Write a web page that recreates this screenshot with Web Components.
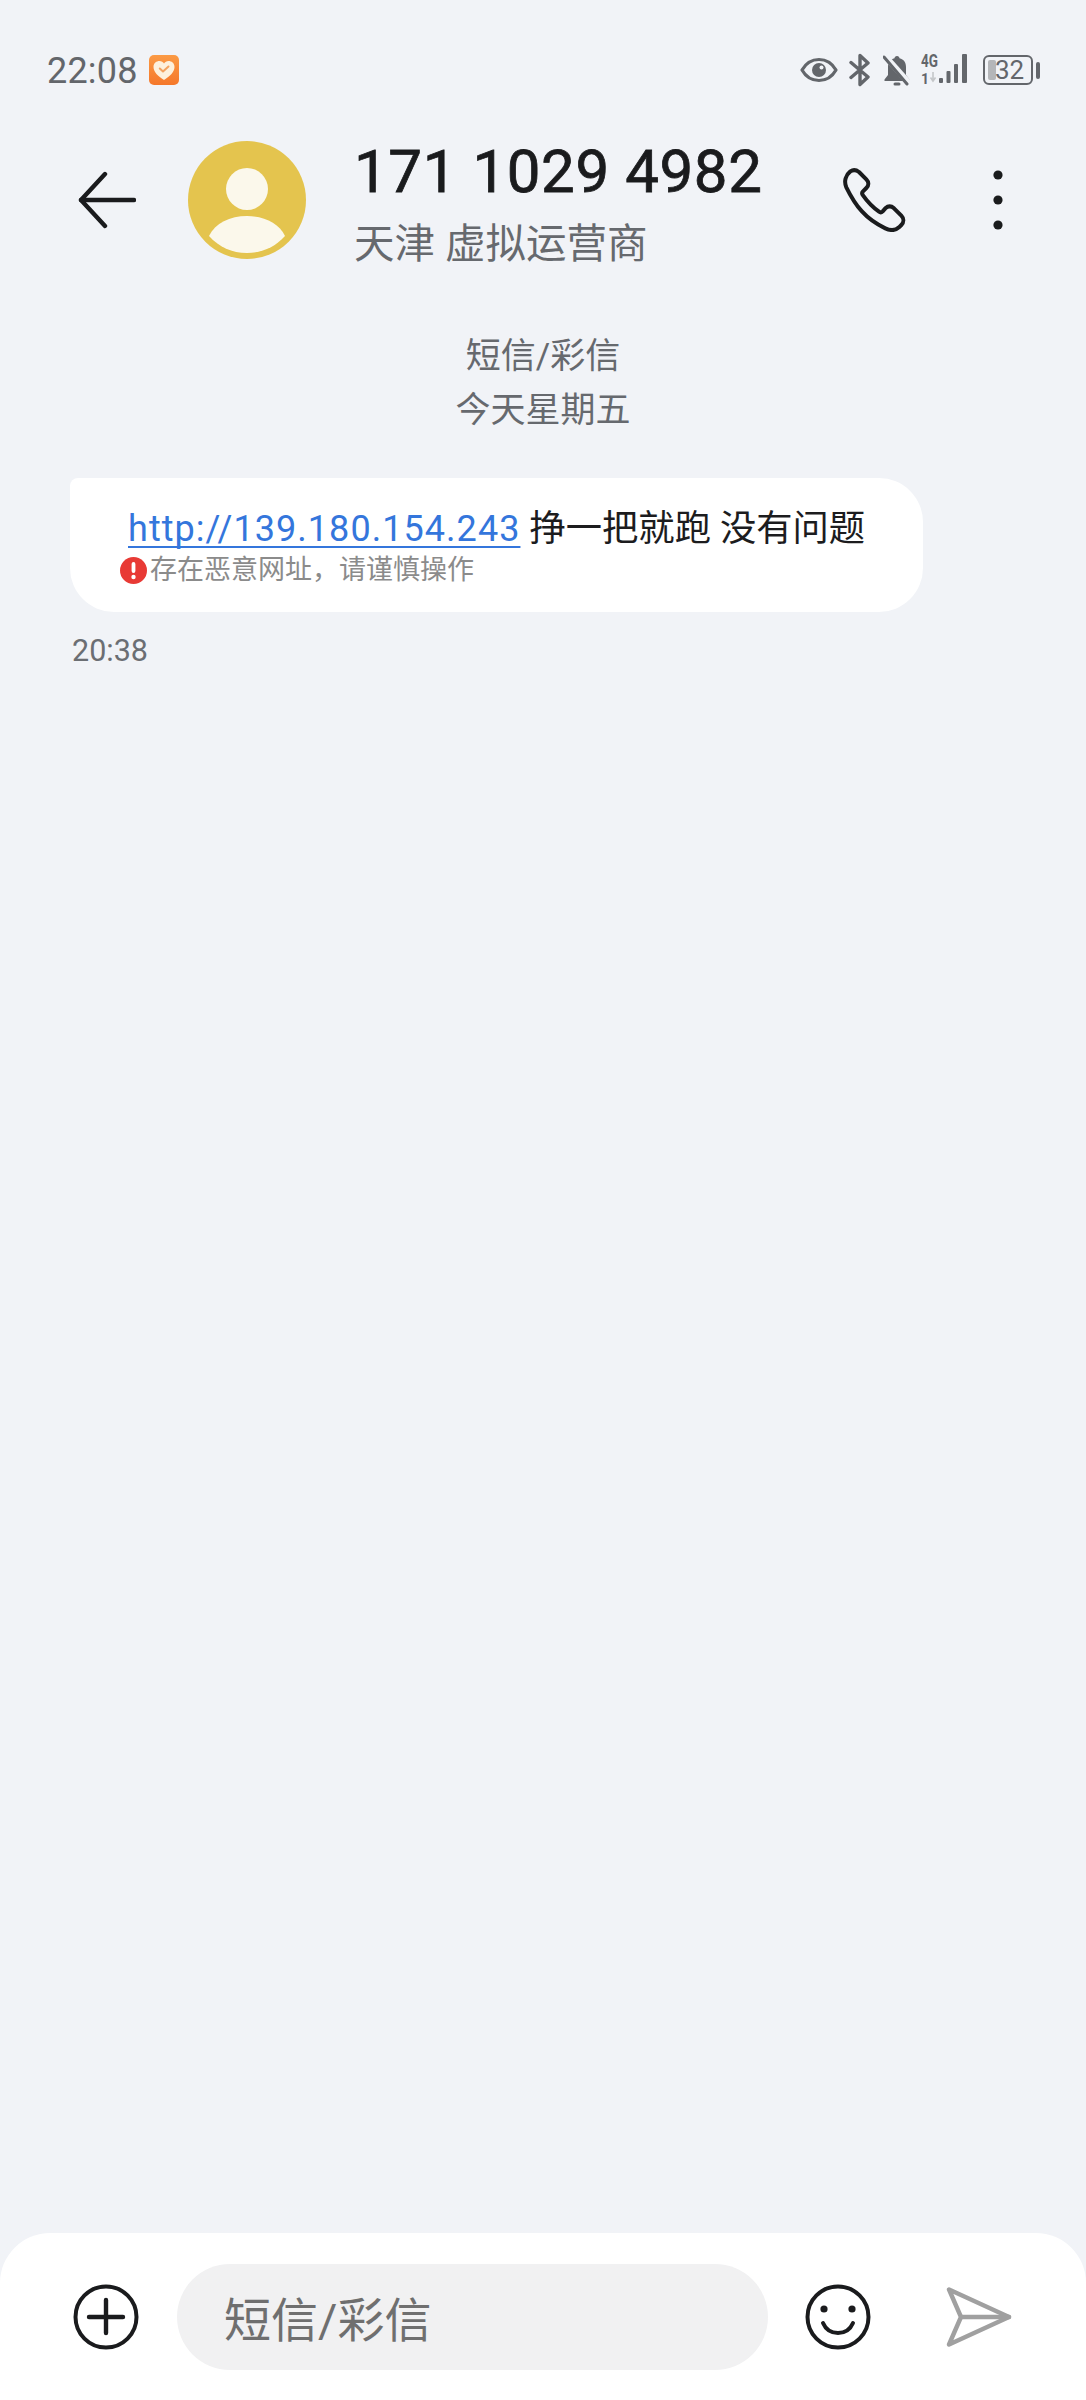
<!DOCTYPE html>
<html lang="zh">
<head>
<meta charset="utf-8">
<title>短信</title>
<style>
  html, body { margin: 0; padding: 0; }
  body {
    width: 1086px;
    height: 2400px;
    background: #f1f3f7;
    font-family: Roboto, "Noto Sans CJK SC", sans-serif;
    overflow: hidden;
  }
  sms-screen { height: 2400px; }
</style>
</head>
<body>
<sms-screen>
  <status-bar slot="top" time="22:08" battery="32"></status-bar>
  <chat-header slot="top" number="171 1029 4982" place="天津 虚拟运营商"></chat-header>
  <thread-notice>
    <div>短信/彩信</div>
    <div>今天星期五</div>
  </thread-notice>
  <message-bubble time="20:38" url="http://139.180.154.243" warning="存在恶意网址，请谨慎操作">挣一把就跑 没有问题</message-bubble>
  <composer-bar slot="bottom" placeholder="短信/彩信"></composer-bar>
</sms-screen>

<script>
const FONT = 'Roboto, "Noto Sans CJK SC", sans-serif';

class SmsScreen extends HTMLElement {
  connectedCallback() {
    this.attachShadow({ mode: 'open' });
    this.shadowRoot.innerHTML = `
      <style>
        :host { display: flex; flex-direction: column; font-family: ${FONT}; }
        .list { flex: 1; min-height: 0; }
      </style>
      <slot name="top"></slot>
      <div class="list"><slot></slot></div>
      <slot name="bottom"></slot>
    `;
  }
}

class StatusBar extends HTMLElement {
  connectedCallback() {
    this.attachShadow({ mode: 'open' });
    this.shadowRoot.innerHTML = `
      <style>
        :host {
          display: flex;
          align-items: center;
          height: 140px;
          padding: 0 46px 0 47px;
          box-sizing: border-box;
          color: #63666b;
        }
        .time { font-size: 36px; line-height: 40px; letter-spacing: .2px; padding-top: 1px; }
        .app { margin-left: 11px; display: block; }
        .right { margin-left: auto; display: flex; align-items: center; }
        svg { display: block; }
        .net { position: relative; width: 49px; height: 34px; margin-left: 10px; }
        .net svg { position: absolute; left: 0; top: 0; }
        .g4 {
          position: absolute; left: 0; top: -2px;
          font-size: 18px; line-height: 20px; font-weight: 700;
          transform: scaleX(.75); transform-origin: left top;
        }
        .one {
          position: absolute; left: 0; top: 18px;
          font-size: 14px; line-height: 16px; font-weight: 700;
        }
        .battery {
          position: relative;
          width: 50px; height: 30px;
          margin-left: 13px;
          padding-left: 3px;
          border: 2.5px solid #63666b;
          border-radius: 6px;
          box-sizing: border-box;
          display: flex; align-items: center; justify-content: center;
          font-size: 26px;
          line-height: 26px;
          overflow: hidden;
        }
        .battery i {
          position: absolute; left: 3px; top: 3px; bottom: 3px; width: 8px;
          background: #b4b6b9; border-radius: 2px;
        }
        .battery span { position: relative; }
        .nub { width: 4px; height: 17px; margin-left: 3px; background: #63666b; border-radius: 2px; }
      </style>
      <span class="time">${this.getAttribute('time')}</span>
      <svg class="app" width="30" height="30" viewBox="0 0 30 30">
        <defs><linearGradient id="o" x1="0" y1="0" x2="0" y2="1">
          <stop offset="0" stop-color="#fb9a45"/><stop offset="1" stop-color="#f5772a"/>
        </linearGradient></defs>
        <rect width="30" height="30" rx="5" fill="url(#o)"/>
        <path d="M15 25C9 21 4.500 17 4.500 12C4.500 8 7.500 6 10.500 6C12.500 6 14 7 15 8.500C16 7 17.500 6 19.500 6C22.500 6 25.500 8 25.500 12C25.500 17 21 21 15 25Z" fill="#fdf0dc"/>
        <path d="M10.800 13.500L14 16.500L19.500 11.500" fill="none" stroke="#f3a25f" stroke-width="2" stroke-linecap="round" stroke-linejoin="round"/>
      </svg>
      <div class="right">
        <svg width="38" height="26" viewBox="0 0 38 26">
          <path d="M2 13C6 6 12 2.500 19 2.500C26 2.500 32 6 36 13C32 20 26 23.500 19 23.500C12 23.500 6 20 2 13Z" fill="none" stroke="#63666b" stroke-width="3.200" stroke-linejoin="round"/>
          <circle cx="19" cy="13" r="7" fill="#63666b"/>
          <circle cx="21.500" cy="10.500" r="2" fill="#f1f3f7"/>
        </svg>
        <svg style="margin-left:11px" width="22" height="34" viewBox="0 0 22 34">
          <path d="M2 9.500L19 24L11 31.500V2.500L19 10L2 24.500" fill="none" stroke="#63666b" stroke-width="3.400" stroke-linejoin="round" stroke-linecap="round"/>
        </svg>
        <svg style="margin-left:12px" width="28" height="34" viewBox="0 0 28 34">
          <path d="M14 3C15.500 3 16.500 4 16.500 5.300C20.800 6.300 23 9.500 23 14V22L26.500 26.500V28H1.500V26.500L5 22V14C5 9.500 7.200 6.300 11.500 5.300C11.500 4 12.500 3 14 3Z" fill="#63666b"/>
          <rect x="10.500" y="29.500" width="7" height="3" rx="1.500" fill="#63666b"/>
          <path d="M2 3L26 30" stroke="#f1f3f7" stroke-width="6"/>
          <path d="M1 4L24 31" stroke="#63666b" stroke-width="3" stroke-linecap="round"/>
        </svg>
        <div class="net">
          <span class="g4">4G</span>
          <span class="one">1</span>
          <svg width="49" height="34" viewBox="0 0 49 34">
            <path d="M12 19V27M9.500 24.500L12 28L14.500 24.500" fill="none" stroke="#c4c6c9" stroke-width="1.600"/>
            <rect x="18" y="25" width="4" height="5" rx="1" fill="#63666b"/>
            <rect x="25.500" y="18" width="4" height="12" rx="1" fill="#63666b"/>
            <rect x="33" y="11" width="4" height="19" rx="1" fill="#63666b"/>
            <rect x="41" y="1" width="5" height="29" rx="1" fill="#63666b"/>
          </svg>
        </div>
        <div class="battery"><i></i><span>${this.getAttribute('battery')}</span></div>
        <div class="nub"></div>
      </div>
    `;
  }
}

class ChatHeader extends HTMLElement {
  connectedCallback() {
    this.attachShadow({ mode: 'open' });
    this.shadowRoot.innerHTML = `
      <style>
        :host {
          display: flex;
          align-items: center;
          height: 120px;
          padding: 0 78px 0 77px;
          box-sizing: border-box;
        }
        svg { display: block; flex: none; }
        .avatar { margin-left: 52px; }
        .who { margin: 4px 0 0 48px; display: flex; flex-direction: column; }
        .number {
          font-size: 60px; line-height: 70px; font-weight: 400; color: #1a1b1d;
          letter-spacing: .6px;
          -webkit-text-stroke: .8px #1a1b1d;
        }
        .place { font-size: 40.5px; line-height: 48px; color: #66696e; margin-top: 13px; white-space: pre; }
        .phone { margin-left: auto; }
        .more { margin-left: 82px; }
      </style>
      <svg width="59" height="58" viewBox="0 0 59 58" fill="none" stroke="#1a1b1d" stroke-width="4.400" stroke-linecap="round" stroke-linejoin="round">
        <path d="M28 3L4 29L28 55"/>
        <path d="M4 29H57"/>
      </svg>
      <svg class="avatar" width="118" height="118" viewBox="0 0 118 118">
        <circle cx="59" cy="59" r="59" fill="#e4c44e"/>
        <circle cx="59" cy="48" r="21" fill="#fbf8eb"/>
        <path d="M21 95C27 82 42 75 59 75C76 75 91 82 97 95C87 106 74 112 59 112C44 112 31 106 21 95Z" fill="#fbf8eb"/>
      </svg>
      <div class="who">
        <span class="number">${this.getAttribute('number')}</span>
        <span class="place">${this.getAttribute('place')}</span>
      </div>
      <svg class="phone" width="64" height="64" viewBox="125 82 192 192">
        <path d="M150 92C158 87 168 88 176 94L198 116C206 124 206 134 198 142L188 152C185 155 185 160 188 164C202 184 218 200 236 213C240 216 244 215 247 212L255 203C263 196 273 196 281 203L303 225C311 233 311 245 303 253L296 260C285 270 270 270 255 263C195 235 165 195 138 140C130 122 136 103 150 92Z" fill="none" stroke="#1a1b1d" stroke-width="12" stroke-linejoin="round"/>
      </svg>
      <svg class="more" width="20" height="68" viewBox="0 0 20 68">
        <circle cx="10" cy="9" r="4.600" fill="#1a1b1d"/>
        <circle cx="10" cy="34" r="4.600" fill="#1a1b1d"/>
        <circle cx="10" cy="59" r="4.600" fill="#1a1b1d"/>
      </svg>
    `;
  }
}

class ThreadNotice extends HTMLElement {
  connectedCallback() {
    this.attachShadow({ mode: 'open' });
    this.shadowRoot.innerHTML = `
      <style>
        :host {
          display: block;
          margin-top: 70px;
          text-align: center;
          font-size: 35px;
          line-height: 54px;
          color: #66696e;
        }
      </style>
      <slot></slot>
    `;
  }
}

class MessageBubble extends HTMLElement {
  connectedCallback() {
    this.attachShadow({ mode: 'open' });
    this.shadowRoot.innerHTML = `
      <style>
        :host { display: block; margin: 40px 0 0 70px; }
        .bubble {
          width: 853px;
          height: 134px;
          padding: 28px 0 0 50px;
          box-sizing: border-box;
          background: #fff;
          border-radius: 8px 44px 44px 44px;
        }
        .body { padding-left: 8px; font-size: 36.3px; line-height: 46px; color: #1c1c1e; white-space: pre; }
        a {
          color: #3476dc;
          font-size: 36px;
          letter-spacing: 1.05px;
          text-decoration: underline;
          text-decoration-thickness: 2px;
          text-underline-offset: 5px;
          text-decoration-skip-ink: none;
        }
        .warn { display: flex; align-items: center; margin-top: 1px; font-size: 27px; line-height: 34px; color: #8b8b8b; }
        .warn svg { display: block; margin-right: 3px; flex: none; }
        .time { margin: 21px 0 0 2px; font-size: 30.500px; line-height: 36px; color: #6b6e73; }
      </style>
      <div class="bubble">
        <div class="body"><a>${this.getAttribute('url')}</a> <slot></slot></div>
        <div class="warn">
          <svg width="27" height="27" viewBox="0 0 27 27">
            <circle cx="13.500" cy="13.500" r="13.500" fill="#e83a35"/>
            <rect x="11.600" y="5" width="3.800" height="11" rx="1.900" fill="#fff"/>
            <circle cx="13.500" cy="20" r="2.200" fill="#fff"/>
          </svg>
          <span>${this.getAttribute('warning')}</span>
        </div>
      </div>
      <div class="time">${this.getAttribute('time')}</div>
    `;
  }
}

class ComposerBar extends HTMLElement {
  connectedCallback() {
    this.attachShadow({ mode: 'open' });
    this.shadowRoot.innerHTML = `
      <style>
        :host {
          display: flex;
          align-items: center;
          height: 167px;
          padding: 0 72px 0 73px;
          box-sizing: border-box;
          background: #fff;
          border-radius: 50px 50px 0 0;
        }
        svg { display: block; flex: none; }
        .input {
          flex: none;
          width: 591px;
          height: 106px;
          margin-left: 38px;
          padding-left: 47px;
          box-sizing: border-box;
          display: flex;
          align-items: center;
          background: #f1f1f2;
          border-radius: 53px;
          font-size: 47px;
          color: #6f6f6f;
        }
        .smile { margin-left: 37px; }
        .send { margin-left: 75px; }
      </style>
      <svg width="66" height="66" viewBox="0 0 66 66" fill="none" stroke="#1a1b1d" stroke-linecap="round">
        <circle cx="33" cy="33" r="30.500" stroke-width="4"/>
        <path d="M33 16V49M16 33H50" stroke-width="4.400"/>
      </svg>
      <div class="input">${this.getAttribute('placeholder')}</div>
      <svg class="smile" width="66" height="66" viewBox="0 0 66 66" fill="none" stroke="#1a1b1d">
        <circle cx="33" cy="33" r="30.500" stroke-width="4"/>
        <circle cx="19" cy="25" r="3.600" fill="#1a1b1d" stroke="none"/>
        <circle cx="47" cy="25" r="3.600" fill="#1a1b1d" stroke="none"/>
        <path d="M18 39C21 46 27 49 33 49C39 49 45 46 48 39" stroke-width="4" stroke-linecap="round"/>
      </svg>
      <svg class="send" width="66" height="60" viewBox="0 0 66 60" fill="none" stroke="#a0a0a0" stroke-width="4.400" stroke-linejoin="round" stroke-linecap="round">
        <path d="M3 2.500L63 30L3 57.500L15 30Z"/>
        <path d="M15 30H63"/>
      </svg>
    `;
  }
}

customElements.define('sms-screen', SmsScreen);
customElements.define('status-bar', StatusBar);
customElements.define('chat-header', ChatHeader);
customElements.define('thread-notice', ThreadNotice);
customElements.define('message-bubble', MessageBubble);
customElements.define('composer-bar', ComposerBar);
</script>
</body>
</html>
